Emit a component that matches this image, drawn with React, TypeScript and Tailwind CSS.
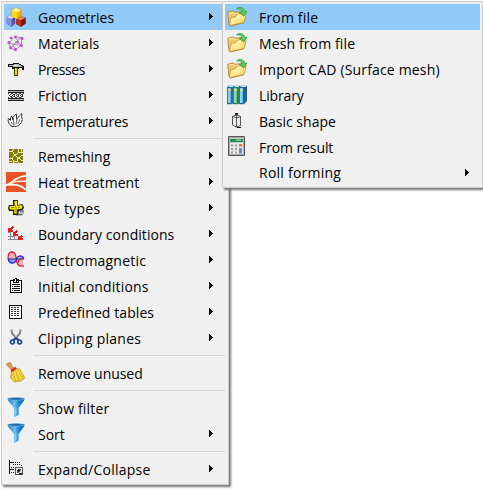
import type { ReactNode } from "react";

function Icon({ children, crisp }: { children: ReactNode; crisp?: boolean }) {
  return (
    <svg width="20" height="20" viewBox="0 0 20 20" fill="none" overflow="visible" shapeRendering={crisp ? "crispEdges" : "auto"}>
      {children}
    </svg>
  );
}

const geometries = (
  <Icon>
    <path d="M1 10.5 4 8 9 9.5v7l-3.5 3-4.5-3z" fill="#5557ad" stroke="#4a4790" strokeWidth=".6" />
    <path d="M1 10.5 4 8 9 9.5 5.5 12z" fill="#d9dcff" />
    <path d="M1 10.5 5.5 12v7.5L1 16.5z" fill="#8d91e4" />
    <path d="M10.5 12 14.5 9.5l5 1.5v5.5L15 19.5l-4.5-2.5z" fill="#7d1609" stroke="#6b1708" strokeWidth=".6" />
    <path d="M10.5 12 14.5 9.5l5 1.5L15 13z" fill="#e78b72" />
    <path d="M10.5 12l4.5 1.5v6L10.5 17z" fill="#bd3519" />
    <path d="M5.5 3.5 10 .7l5 2.3v6.5L10 12 5.5 9z" fill="#ffb300" stroke="#b98000" strokeWidth=".6" />
    <path d="M5.5 3.5 10 .7l5 2.3-4 2.6z" fill="#fff98a" />
    <path d="M5.5 3.5 11 5.6V12L5.5 9z" fill="#ffd91c" />
  </Icon>
);

const materials = (
  <Icon>
    <path d="M3 9.5 9 3.7l7 1-1 8-6 4-4-1zM3 9.5l4 2 8-7M7 11.5l2 5M7 11.5l9 1M9 4l6 8.5M5 15.5 10 9" stroke="#a58caf" strokeWidth="1" />
    <g fill="#c944d5">
      <circle cx="3" cy="9.5" r="1.5" /><circle cx="9.5" cy="4" r="1.4" /><circle cx="16" cy="5.5" r="1.6" />
      <circle cx="15.5" cy="12.5" r="1.5" /><circle cx="9.5" cy="16.5" r="1.5" /><circle cx="4.5" cy="14.8" r="1.5" />
      <circle cx="5" cy="5" r="1.3" /><circle cx="11.5" cy="9.5" r="1.2" />
    </g>
  </Icon>
);

const presses = (
  <Icon crisp>
    <path d="M2 5h5V4h6v1h2v1h2v1h1v4h-2V9h-3v1H6V8H2z" fill="#111" />
    <path d="M3 6h5V5h5v1h2v1h1v1H7V7H3z" fill="#b8b8b8" /><path d="M7 6h5v1H7z" fill="#eee" />
    <path d="M8 9h4v8H8z" fill="#4a4300" /><path d="M9 9h2v7H9z" fill="#e2d414" />
  </Icon>
);

const friction = (
  <Icon crisp>
    <path d="M2 5h16v11H2z" fill="#222" />
    <path d="M2 6h16v1H2zM2 14h16v1H2z" fill="#aaa" />
    <path d="M2 8h16v5H2z" fill="#eee" />
    <path d="M2 8h1v1H2zM5 8h2v1H5zM9 8h2v1H9zM13 8h2v1h-2zM17 8h1v1h-1zM4 9h1v1H4zM7 9h2v1H7zM11 9h2v1h-2zM15 9h2v1h-2zM3 10h1v1H3zM6 10h1v1H6zM8 10h1v1H8zM10 10h1v1h-1zM12 10h1v1h-1zM14 10h1v1h-1zM16 10h1v1h-1zM4 11h2v1H4zM7 11h2v1H7zM11 11h2v1h-2zM15 11h2v1h-2zM2 12h1v1H2zM5 12h2v1H5zM9 12h2v1H9zM13 12h2v1h-2z" fill="#333" />
  </Icon>
);

const temperatures = (
  <Icon>
    <path d="M6 15.5C3 13.5 1.5 10.5 2.5 7.5l2 2c-.3-3 0-4 1.5-4.5l1 4c0-4 1.5-4.5 3.5-6v5c2-1 2.5-3 5.5-5.5-.5 3-.5 5 .5 5.5-1 5-3.5 8-10.5 7.5z" fill="#fff" stroke="#111" strokeWidth="1" strokeDasharray="2.5 .5" />
    <path d="M5 11c1 2 2 3 4 3m-2-6 1 5m3-5-1 5m4-5-2 5" stroke="#333" strokeWidth=".8" />
  </Icon>
);

const remeshing = (
  <Icon crisp>
    <path d="M3 3h14v14H3z" fill="#808000" />
    <path d="M3 5h3l2-2M6 5l3 4 3-2V3M9 9 6 12H3M9 9l3 3 5-3M12 7l3-1V3M15 6l2 1M6 12l2 3h3l1-3M8 15l-1 2M3 15l3 1M11 15l2 2M12 12l3 2h2" stroke="#f1f1d0" strokeWidth=".9" />
  </Icon>
);

const heat = (
  <Icon>
    <path d="M0 0h20v20H0z" fill="#ea5424" />
    <path d="M0 13C7 12.6 6 5 20 3.8" stroke="#fff" strokeWidth="1.7" />
    <path d="M5 11.5C9 8.7 14 8.8 20 9.3" stroke="#fff" strokeWidth="1.4" />
    <path d="M0 13C9 12 15 12.5 20 18" stroke="#fff" strokeWidth="1.7" />
  </Icon>
);

const dies = (
  <Icon>
    <path d="M10 15.5h8l-2.5 2H10zM14 12.5h4v2h-4z" fill="#777" />
    <path d="M7 2h5v5l4-1 2 3-1 3-4 1-1 4H7v-4H3l-1-3 1-3h4z" fill="#222" />
    <path d="M8.5 3h2.7v5l4.3-1 1 2-1 1.8-4.3.5-.5 4.2H8.2v-4H4L3.3 9.5 4.2 8h4.3z" fill="#f7ee00" />
    <path d="M8 6l2 3v5M5 9.5h3M12 9.5h2" stroke="#656000" strokeWidth=".8" />
  </Icon>
);

const boundary = (
  <Icon crisp>
    <path d="M2 8h3M2 12h6M2 15h13M4 8v8M8 11v5M12 14v2" stroke="#888" />
    <path d="M7 3 3.5 6.5M11 7l-3.5 3.5M16 12l-3.5 3.5" stroke="#ed1c24" strokeWidth="1.6" />
    <path d="M2 4h2v2h3v2H2zM7 8h2v2h3v2H7zM12 12h2v2h3v2h-5z" fill="#ed1c24" />
  </Icon>
);

const electro = (
  <Icon>
    <path d="M2 8.5C2 .3 9-.3 10 7.5c.7 7 2.5 9.5 8 8.5M12.5 13c-.5-3 1.5-5.2 5.5-5.5" stroke="#e51b2c" strokeWidth="1.3" />
    <path d="M4 4v5M6 2v7M8 3.5V9M12 9v6M14 9v7M16 8v8" stroke="#e5404c" strokeWidth=".7" />
    <path d="M2 8.5c1.5 6.5 7 5 8 1.5 1-4.5 5.5-5.5 8-1.5" fill="#cfd1ff" fillOpacity=".65" stroke="#1c28ea" strokeWidth="1.3" />
    <path d="M2 9h16" stroke="#20206d" />
    <path d="M4 9v3m2-3v3.5M8 9v2.5" stroke="#1c28ea" strokeWidth=".7" />
  </Icon>
);

const initial = (
  <Icon crisp>
    <path d="M4 4h12v13H4z" fill="#000" /><path d="M5 5h10v11H5z" fill="#fff" />
    <path d="M7 3h2V2h2v1h2v4H7z" fill="#000" /><path d="M9 3h1v3H9zM8 5h1v1H8zM11 5h1v1h-1z" fill="#fff" />
    <path d="M6 8h8v1H6zM8 10h6v1H8zM6 12h8v1H6zM8 14h6v1H8zM6 10h1v1H6zM6 14h1v1H6z" fill="#111" />
  </Icon>
);

const tables = (
  <Icon crisp>
    <path d="M3 3h13v14H3z" fill="#111" /><path d="M4 4h11v12H4z" fill="#fff" />
    <path d="M5 5.5h9M5 7.5h9M5 9.5h9M5 11.5h9M5 13.5h9" stroke="#333" strokeDasharray="2 1" />
  </Icon>
);

const scissors = (
  <Icon>
    <path d="M5.5 1.5l.8 4L12 12M14.5 1.5l-.8 4L8 12" stroke="#777c80" strokeWidth="2" />
    <path d="M5.8 2.5 12 11M14.2 2.5 8 11" stroke="#d7dadd" strokeWidth=".7" />
    <circle cx="6.4" cy="14" r="1.9" stroke="#2450ad" strokeWidth="1.8" />
    <circle cx="13.6" cy="14" r="1.9" stroke="#2450ad" strokeWidth="1.8" />
    <path d="m7.3 12 2.7-2 2.7 2" stroke="#173d91" strokeWidth="1.8" />
  </Icon>
);

const broom = (
  <Icon>
    <path d="M.7 2C.2-.2 3.5-1.2 5 .5l1 3L9 6 6.5 8 4 5.2z" fill="#e29a4e" stroke="#ae672b" strokeWidth=".6" />
    <path d="M5.5 7.5 10 5l4 1.5L18.8 15 15 18l-6.5 1-4-4z" fill="#f0ce33" stroke="#b78d13" strokeWidth=".7" />
    <path d="M4.5 7 9.3 3.7l1.4 2.1-4.8 3.5z" fill="#da301d" />
    <path d="m7.5 9.5 2 8m.2-9 3 9m-.7-10 4 9" stroke="#c79b18" strokeWidth=".6" />
    <path d="m8.3 9 2.5 8M11 8l4 8" stroke="#fff08a" strokeWidth=".8" />
  </Icon>
);

const funnel = (
  <Icon>
    <defs>
      <linearGradient id="funnelBlue" x2="1">
        <stop stopColor="#1573b9" /><stop offset=".4" stopColor="#71c2f1" /><stop offset=".65" stopColor="#218bdc" /><stop offset="1" stopColor="#07549d" />
      </linearGradient>
    </defs>
    <path d="M1.8 0h16.5v2L12.6 10v6.8L8 19.2V10L1.8 2z" fill="url(#funnelBlue)" />
    <ellipse cx="10" cy=".9" rx="8" ry="1.4" fill="#1c69ab" stroke="#77b9e4" strokeWidth=".7" />
    <path d="M8.8 10.5v7l1.7-1V10z" fill="#9bdcff" opacity=".65" />
  </Icon>
);

const expand = (
  <Icon crisp>
    <path d="M3 1h1v14H3zM4 3h4v1H4zM9 3h1v1H9zM11 3h1v1h-1zM7 5h1v1H7zM9 5h1v1H9zM11 5h1v1h-1zM13 5h1v1h-1zM5 8h1v1H5zM7 8h1v1H7zM4 10h4v1H4zM5 13h1v1H5zM7 13h1v1H7zM13 3h1v1h-1zM15 6h1v1h-1z" fill="#111" />
    <path d="M9.5 8.5h7v7h-7z" fill="#e2e2e2" stroke="#555" />
    <path d="M11 11h3v1h-3zM12 10h1v3h-1zM13 14h3v1h-3zM11 14l4-4" fill="#111" stroke="#222" strokeWidth=".6" />
  </Icon>
);

const folder = (
  <Icon>
    <defs>
      <linearGradient id="folderFace" x2="1" y2="1">
        <stop stopColor="#fffbd0" /><stop offset=".5" stopColor="#ffeb93" /><stop offset="1" stopColor="#f4cb5c" />
      </linearGradient>
    </defs>
    <path d="M.7 5.2 6.5 4l1.5 1.3 8.5-1 1.3 1-1.3 10.5L3.5 19 2 17.7z" fill="#f0ca68" stroke="#bd842c" strokeWidth=".9" />
    <path d="m2 6.2 4.5-.9L8 6.8l7-1" stroke="#fff3b7" />
    <path d="M2.7 18.5C2.5 15.5 3.4 12.5 4.2 10.5l4.5-1 1.5-2.4 9-1.4c-.7 3.5-.9 6.5-2.2 9.8z" fill="url(#folderFace)" stroke="#bd8b35" strokeWidth=".8" />
    <path d="M9.5 2C12-.8 17 .2 17.7 4.5l2-.3-3 5-4.3-3.7 2.6-.4c-.2-2.4-2.4-3.8-5.5-3.1z" fill="#5cce54" stroke="#229638" strokeWidth=".7" />
  </Icon>
);

const library = (
  <Icon>
    <path d="M0 2 2 .8h5v17l-2 1.4H0z" fill="#286da0" /><path d="M.8 3H4v15H.8z" fill="#5bb1d9" />
    <path d="M6 2 8 .8h5v17l-2 1.4H6z" fill="#26865b" /><path d="M6.8 3H10v15H6.8z" fill="#64bf7c" />
    <path d="m12 2 2-1.2h6v15l-3 3.4h-5z" fill="#285f9d" /><path d="M12.8 3H16v15h-3.2z" fill="#5bc2e7" />
    <path d="M2 3v15M8 3v15M14 3v15" stroke="#c1eff2" strokeWidth=".9" />
    <path d="M1 5h3M7 5h3M13 5h3" stroke="#ebdc7a" strokeWidth="1.5" />
    <path d="M2 1.5h4m2 0h4m2 0h5" stroke="#bfe1e9" />
  </Icon>
);

const shape = (
  <Icon>
    <path d="M5.5 5.5 9.5 4 13.5 5.5v9L9.5 16 5.5 14zM5.5 5.5 9.5 7 13.5 5.5M9.5 2.5V16" stroke="#444" strokeWidth=".9" />
    <path d="M8 2.5h3M8 4l1.5-2L11 4M10 16.5h4" stroke="#111" />
  </Icon>
);

const calculator = (
  <Icon>
    <path d="M1.5-.5h16v19h-16z" fill="#e9e9e9" stroke="#555" />
    <path d="M2.5.5h14v17h-14z" stroke="#aaa" />
    <path d="M3.5 2h12v3h-12z" fill="#23945c" stroke="#177040" strokeWidth=".5" />
    <path d="M9 2.5h5v1.2H9z" fill="#a5ddb5" />
    <path d="M4 7.5h2v2H4zM8 7.5h2v2H8zM4 11h2v2H4zM8 11h2v2H8zM4 14.5h2v2H4zM8 14.5h2v2H8z" fill="#999da1" />
    <path d="M12 11h3v5.5h-3z" fill="#5e91c5" /><path d="M12 7h3v2.7h-3z" fill="#f2792c" />
  </Icon>
);

type Item = { label: string; icon?: ReactNode; track: string; arrow?: boolean; active?: boolean };

function Row({ item, sub }: { item: Item; sub?: boolean }) {
  return (
    <div className={`flex h-[26px] items-center pl-0.5 ${sub ? "pr-[11px]" : "pr-[13px]"} ${item.active ? "bg-[#91c9f7]" : ""}`}>
      <div className="mr-3 h-5 w-5 shrink-0">{item.icon}</div>
      <span className={`flex-1 whitespace-nowrap ${item.icon ? "pt-0.5" : "pt-0"} ${item.track}`}>{item.label}</span>
      {item.arrow && (
        <svg className="mb-px" width="4" height="7" viewBox="0 0 4 7" shapeRendering="crispEdges"><path d="M0 0h1v1h1v1h1v1h1v1H3v1H2v1H1v1H0z" /></svg>
      )}
    </div>
  );
}

const groups: Item[][] = [
  [
    { label: "Geometries", icon: geometries, track: "tracking-normal", arrow: true, active: true },
    { label: "Materials", icon: materials, track: "tracking-[0.1px]", arrow: true },
    { label: "Presses", icon: presses, track: "tracking-[-0.4px]", arrow: true },
    { label: "Friction", icon: friction, track: "tracking-normal", arrow: true },
    { label: "Temperatures", icon: temperatures, track: "tracking-[-0.17px]", arrow: true },
  ],
  [
    { label: "Remeshing", icon: remeshing, track: "tracking-normal", arrow: true },
    { label: "Heat treatment", icon: heat, track: "tracking-[0.07px]", arrow: true },
    { label: "Die types", icon: dies, track: "tracking-[0.22px]", arrow: true },
    { label: "Boundary conditions", icon: boundary, track: "tracking-[0.05px]", arrow: true },
    { label: "Electromagnetic", icon: electro, track: "tracking-[0.2px]", arrow: true },
    { label: "Initial conditions", icon: initial, track: "tracking-[0.17px]", arrow: true },
    { label: "Predefined tables", icon: tables, track: "tracking-[0.08px]", arrow: true },
    { label: "Clipping planes", icon: scissors, track: "tracking-[0.26px]", arrow: true },
  ],
  [{ label: "Remove unused", icon: broom, track: "tracking-[-0.04px]" }],
  [
    { label: "Show filter", icon: funnel, track: "tracking-[0.16px]" },
    { label: "Sort", icon: funnel, track: "tracking-normal", arrow: true },
  ],
  [{ label: "Expand/Collapse", icon: expand, track: "tracking-[0.24px]", arrow: true }],
];

const subItems: Item[] = [
  { label: "From file", icon: folder, track: "tracking-[0.18px]", active: true },
  { label: "Mesh from file", icon: folder, track: "tracking-[0.12px]" },
  { label: "Import CAD (Surface mesh)", icon: folder, track: "tracking-[0.16px]" },
  { label: "Library", icon: library, track: "tracking-[-0.14px]" },
  { label: "Basic shape", icon: shape, track: "tracking-normal" },
  { label: "From result", icon: calculator, track: "tracking-[-0.1px]" },
  { label: "Roll forming", track: "tracking-[0.24px]", arrow: true },
];

export default function App() {
  return (
    <main className="relative h-[489px] w-[483px] overflow-hidden bg-white pl-px pt-px font-['Open_Sans','Noto_Sans',sans-serif] text-[14px] leading-5 text-black">
      <nav className="h-[484px] w-[228px] border border-[#ccc] bg-[#f0f0f0] p-0.5 shadow-[2px_2px_2px_#777]">
        {groups.map((group, index) => (
          <div key={index}>
            {index > 0 && <div className="flex h-[9px] items-center pl-[30px] pr-px"><div className="h-px w-full bg-[#d5d5d5]" /></div>}
            {group.map((item) => <Row key={item.label} item={item} />)}
          </div>
        ))}
      </nav>
      <nav className="absolute left-[222px] top-px h-[187px] w-[261px] border border-[#ccc] bg-[#f0f0f0] p-0.5 shadow-[2px_2px_2px_#777]">
        {subItems.map((item) => <Row key={item.label} item={item} sub />)}
      </nav>
    </main>
  );
}
